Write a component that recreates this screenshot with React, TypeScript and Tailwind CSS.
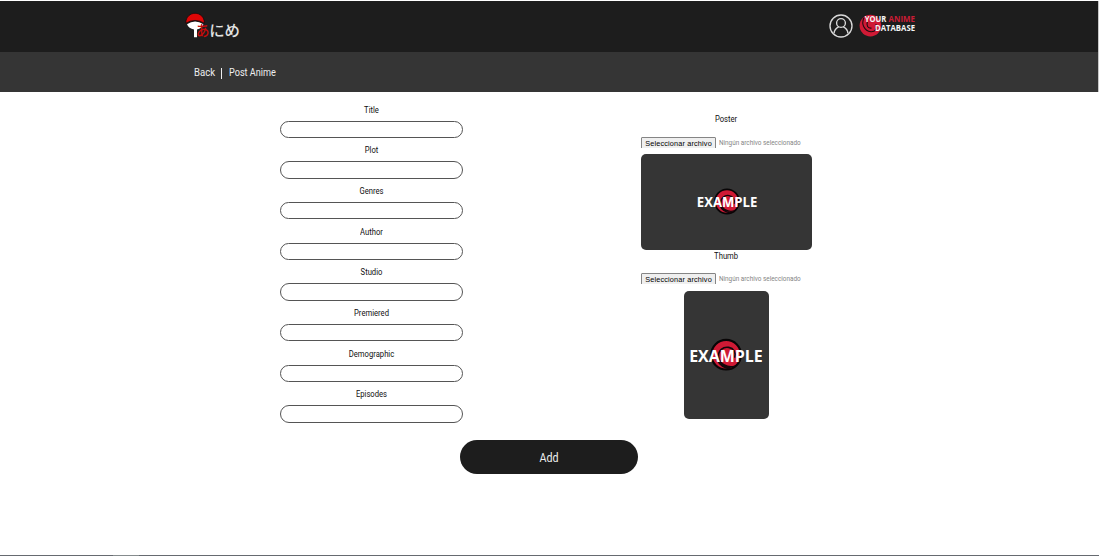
import React from "react";

const fields = ["Title", "Plot", "Genres", "Author", "Studio", "Premiered", "Demographic", "Episodes"];

function ExampleSwirl() {
  return (
    <g>
      <circle r="12.6" fill="#cf1a35" stroke="#080506" strokeWidth="1.8" />
      <path
        d="M7.5 9.8C1 11.5 -5.5 8 -6.4 2C-7 -3.5 -2.5 -7 2.2 -6.2C6.5 -5.4 8.6 -1.6 7.4 2M-7.5 4C-5.5 9 -1 11.6 4.2 11.8"
        fill="none"
        stroke="#12060a"
        strokeWidth="1.4"
        strokeLinecap="round"
      />
    </g>
  );
}

function AnimeLogo() {
  return (
    <svg width="58" height="32" viewBox="0 0 58 32" role="img" aria-label="あにめ">
      <path d="M2 12.3Q10 6.8 18.4 12.3Q16.8 16.8 12 17.4V25.3H9V17.4Q3.8 16.6 2 12.3Z" fill="#fff" />
      <path d="M.8 11.2C.8 -2 19.4 -2 19.4 11.2Q10 5.6 .8 11.2Z" fill="#df0606" stroke="#080808" strokeWidth=".7" />
      <g fontFamily="'Noto Sans CJK JP', sans-serif" fontSize="15.5" fontWeight="500">
        <text x="11" y="24.4" fill="#c30b0b" fontSize="14.5" textLength="13.5" lengthAdjust="spacingAndGlyphs">あ</text>
        <text x="24.2" y="24.2" fill="#e2e2e2" fontSize="15" textLength="30.8" lengthAdjust="spacingAndGlyphs">にめ</text>
      </g>
    </svg>
  );
}

function DatabaseLogo() {
  return (
    <svg width="58" height="28" viewBox="0 0 58 28">
      <circle cx="11.4" cy="14.6" r="10.8" fill="#cf1a35" />
      <path
        d="M4.8 7C2.2 13 5 20 12 20.8C16.6 21 18.6 17 17 13.6M8.4 11C7 14.6 9 17.6 12.2 17"
        fill="none"
        stroke="#21090e"
        strokeWidth="1.1"
        strokeLinecap="round"
      />
      <g fontFamily="'Open Sans', sans-serif" fontWeight="700" fontSize="8.4" fill="#f5f5f5">
        <text x="5.8" y="11" textLength="21.6" lengthAdjust="spacingAndGlyphs">YOUR</text>
        <text x="29.6" y="11" fill="#c91c35" textLength="26.4" lengthAdjust="spacingAndGlyphs">ANIME</text>
        <text x="16" y="20.1" textLength="40" lengthAdjust="spacingAndGlyphs">DATABASE</text>
      </g>
    </svg>
  );
}

function Example({ large = false }: { large?: boolean }) {
  return (
    <svg width="86" height="40" viewBox="-43 -20 86 40">
      <g transform={large ? "translate(-.4 -.3) scale(1.19)" : "translate(0 -.5) scale(.96)"}><ExampleSwirl /></g>
      <text
        x={large ? -37.8 : -30.2}
        y={large ? 6.8 : 5.3}
        fill="#fff"
        fontFamily="'Open Sans', sans-serif"
        fontWeight="700"
        fontSize={large ? 16.8 : 14}
        textLength={large ? 74.5 : 60.5}
        lengthAdjust="spacingAndGlyphs"
      >
        EXAMPLE
      </text>
    </svg>
  );
}

function Label({ children }: { children: React.ReactNode }) {
  return <span className="block h-3 scale-x-[.85] text-center text-[9px] leading-3 text-[#101010]">{children}</span>;
}

function FilePicker() {
  return (
    <div className="flex h-[11px] w-[171px] items-start overflow-hidden whitespace-nowrap">
      <button type="button" className="flex h-[13px] w-[75px] shrink-0 justify-center rounded-[1px] border border-[#858585] bg-[#efefef] font-['Liberation_Sans',sans-serif] text-[7.3px] leading-[11px] text-black">
        <span className="block tracking-[.16px]">Seleccionar archivo</span>
      </button>
      <span className="ml-[3px] origin-left scale-x-[.91] text-[7px] leading-[13px] text-[#858585]">Ningún archivo seleccionado</span>
    </div>
  );
}

export default function App() {
  return (
    <div className="flex h-[558px] w-[1100px] flex-col overflow-hidden bg-white pt-px font-['Roboto',sans-serif]">
      <header className="flex h-[51px] w-[1099px] shrink-0 border-r border-[#c8c8c8] bg-[#1d1d1d]">
        <div className="ml-[185px] mt-[11px]"><AnimeLogo /></div>
        <div className="ml-[586px] mt-[13px]">
          <svg width="24" height="24" viewBox="0 0 24 24" fill="none" stroke="#d9d9d9" strokeWidth="1.35">
            <circle cx="12" cy="12" r="11" />
            <circle cx="12" cy="9" r="4.4" />
            <path d="M5 19.4C5.4 15.5 8 13.6 9.7 12.8M14.3 12.8C16 13.6 18.6 15.5 19 19.4" />
          </svg>
        </div>
        <div className="ml-[6px] mt-[10px]"><DatabaseLogo /></div>
      </header>
      <nav className="flex h-10 w-[1099px] shrink-0 items-center border-r border-[#c8c8c8] bg-[#353535] pl-[194px] pt-[2px] text-[11px] text-[#eeeeee]">
        <a className="w-[21px] whitespace-nowrap" href="#"><span className="inline-block origin-left scale-x-[.87]">Back</span></a>
        <span className="ml-[6px] h-[11px] w-px bg-[#eeeeee]" />
        <span className="ml-[7px] origin-left scale-x-[.83] whitespace-nowrap">Post Anime</span>
      </nav>
      <main className="flex h-[348px] shrink-0">
        <form className="ml-[280px] mt-[11.7px] w-[183px]">
          {fields.map((name) => (
            <label key={name} className="block h-[40.65px]">
              <Label>{name}</Label>
              <input aria-label={name} className="mt-[5px] block h-[17.5px] w-full rounded-full border border-[#555555] bg-white px-2 text-[9px] outline-none" />
            </label>
          ))}
        </form>
        <section className="ml-[178px] mt-[21px] flex w-[171px] flex-col items-center">
          <Label>Poster</Label>
          <div className="mt-[12px]"><FilePicker /></div>
          <div className="mt-[6px] flex h-24 w-[171px] shrink-0 items-center justify-center rounded-[5px] bg-[#353535]"><Example /></div>
          <Label>Thumb</Label>
          <div className="mt-[11px]"><FilePicker /></div>
          <div className="mt-[7px] flex h-32 w-[85px] shrink-0 items-center justify-center rounded-[5px] bg-[#353535]"><Example large /></div>
        </section>
      </main>
      <button type="button" className="ml-[460px] h-[34px] w-[178px] shrink-0 rounded-full bg-[#1d1d1d] pt-px text-[13.5px] text-[#eeeeee]">
        <span className="inline-block scale-x-[.79]">Add</span>
      </button>
      <div className="mt-auto mb-[2px] flex h-px w-[1099px] shrink-0 bg-[#666a70]">
        <span className="ml-[113px] w-[26px] bg-[#858b8d]" />
      </div>
    </div>
  );
}
